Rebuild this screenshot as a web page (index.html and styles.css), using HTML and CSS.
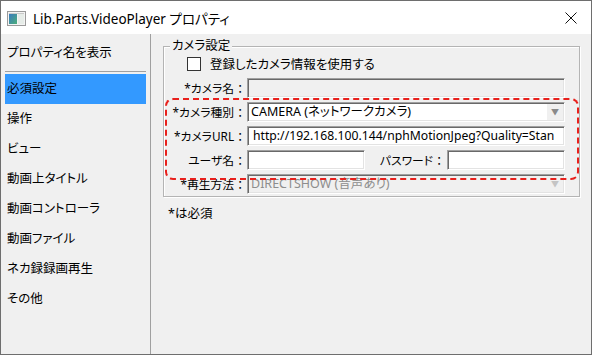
FILE: index.html
```html
<!DOCTYPE html>
<html>

<head>
    <meta charset='UTF-8'>
    <title>Lib.Parts.VideoPlayer プロパティ</title>
    <link rel="stylesheet" href="styles.css">
</head>

<body>
    <div class="window">
        <!-- タイトルバー -->
        <div class="titlebar">
            <svg class="app-icon" width="19" height="15" viewBox="0 0 19 15">
                <defs>
                    <linearGradient id="g" x1="0" y1="0" x2="1" y2="1">
                        <stop offset="0" stop-color="#3a7bbf" />
                        <stop offset="1" stop-color="#4cae7a" />
                    </linearGradient>
                </defs>
                <rect x="0.5" y="0.5" width="18" height="14" fill="#f4f4f4" stroke="#9a9a9a" />
                <rect x="2" y="3" width="8" height="10" fill="url(#g)" />
                <rect x="11" y="3" width="6" height="10" fill="#e6ece8" />
                <rect x="2" y="2" width="15" height="1" fill="#c8c8c8" />
            </svg>
            <span class="title">Lib.Parts.VideoPlayer プロパティ</span>
            <svg class="close" width="12" height="12" viewBox="0 0 12 12">
                <path d="M0.5 0.5 L11.5 11.5 M11.5 0.5 L0.5 11.5" stroke="#111" stroke-width="1" />
            </svg>
        </div>

        <div class="content">
            <!-- 左側メニュー -->
            <div class="sidebar">
                <div class="menu-head">プロパティ名を表示</div>
                <div class="menu-sep"></div>
                <div class="menu-item selected">必須設定</div>
                <div class="menu-item">操作</div>
                <div class="menu-item">ビュー</div>
                <div class="menu-item">動画上タイトル</div>
                <div class="menu-item">動画コントローラ</div>
                <div class="menu-item">動画ファイル</div>
                <div class="menu-item">ネカ録録画再生</div>
                <div class="menu-item">その他</div>
            </div>

            <!-- 右側設定 -->
            <div class="main">
                <div class="group">
                    <span class="group-title">カメラ設定</span>
                    <label class="check-row">
                        <span class="checkbox"></span>
                        <span>登録したカメラ情報を使用する</span>
                    </label>
                    <div class="form">
                        <div class="label">*カメラ名<span class="colon">：</span></div>
                        <div class="field disabled"></div>

                        <div class="label">*カメラ種別<span class="colon">：</span></div>
                        <div class="field combo">
                            <span class="combo-text">CAMERA (ネットワークカメラ)</span>
                            <span class="arrow">▼</span>
                        </div>

                        <div class="label">*カメラURL<span class="colon">：</span></div>
                        <div class="field url">http://192.168.100.144/nphMotionJpeg?Quality=Stan</div>

                        <div class="label">ユーザ名<span class="colon">：</span></div>
                        <div class="pair">
                            <div class="field half"></div>
                            <div class="label pass">パスワード<span class="colon">：</span></div>
                            <div class="field half"></div>
                        </div>

                        <div class="label">*再生方法<span class="colon">：</span></div>
                        <div class="field combo disabled">
                            <span class="combo-text">DIRECTSHOW (音声あり)</span>
                            <span class="arrow">▼</span>
                        </div>
                    </div>
                    <!-- 強調枠 -->
                    <div class="highlight"></div>
                </div>
                <p class="note">*は必須</p>
            </div>
        </div>
    </div>
</body>

</html>
```

FILE: styles.css
```css
* {
    box-sizing: border-box;
}

body {
    margin: 0;
    font-family: "Noto Sans", "Noto Sans CJK JP", sans-serif;
    font-feature-settings: "palt";
    font-size: 12.5px;
    color: #000;
}

/* ウィンドウ全体 */
.window {
    width: 592px;
    height: 355px;
    border: 1px solid #6e6e6e;
    display: flex;
    flex-direction: column;
    background: #fff;
}

.titlebar {
    height: 33px;
    display: flex;
    align-items: center;
    padding-left: 6px;
    background: #fff;
}

.app-icon {
    margin-top: 1px;
}

.title {
    margin-left: 7px;
    font-size: 13.5px;
    flex: 1;
}

.close {
    margin-right: 14px;
}

.content {
    flex: 1;
    display: flex;
    background: #f0f0f0;
}

/* 左メニュー */
.sidebar {
    width: 150px;
    border-right: 1px solid #a0a0a0;
    padding: 4px 4px 0 4px;
}

.menu-head,
.menu-item {
    height: 30px;
    line-height: 30px;
    padding-left: 2px;
    white-space: nowrap;
}

.menu-sep {
    height: 1px;
    background: #a0a0a0;
    margin: 3px 0 2px 0;
}

.menu-item.selected {
    background: #3399ff;
}

/* 右側 */
.main {
    flex: 1;
    padding: 12px 11px 0 12px;
}

.group {
    position: relative;
    border: 1px solid #b4b4b4;
    box-shadow: inset 1px 1px 0 #fff, 1px 1px 0 #fff;
    padding: 9px 13px 2px 0;
}

.group-title {
    position: absolute;
    top: -10px;
    left: 6px;
    padding: 0 2px;
    background: #f0f0f0;
    line-height: 18px;
}

.check-row {
    display: flex;
    align-items: center;
    height: 15px;
    margin: 0 0 7px 23px;
    gap: 9px;
}

.checkbox {
    width: 14px;
    height: 14px;
    border: 1px solid #333;
    background: #fff;
}

.form {
    display: grid;
    grid-template-columns: 80px 318px;
    column-gap: 3px;
    row-gap: 4px;
}

.label {
    text-align: right;
    line-height: 20px;
    font-size: 11.8px;
    white-space: nowrap;
}

.colon {
    margin-left: 3px;
    margin-right: 1px;
}

.field {
    height: 20px;
    background: #fff;
    border: 1px solid;
    border-color: #a0a0a0 #fff #fff #a0a0a0;
    box-shadow: inset 1px 1px 0 #696969, inset -1px -1px 0 #e3e3e3;
    line-height: 18px;
    white-space: nowrap;
    overflow: hidden;
}

.field.disabled {
    background: #f0f0f0;
}

.field.url {
    padding-left: 5px;
    font-size: 12.2px;
}

.combo {
    display: flex;
    align-items: center;
    padding-left: 3px;
}

.combo-text {
    flex: 1;
}

.combo.disabled .combo-text {
    color: #8d8d8d;
}

.arrow {
    width: 16px;
    height: 16px;
    margin-right: 1px;
    text-align: center;
    font-size: 8px;
    line-height: 16px;
    color: #8a8a8a;
    background: #f0f0f0;
}

.combo.disabled .arrow {
    color: #c4c4c4;
}

.pair {
    display: flex;
    gap: 4px;
}

.field.half {
    width: 118px;
}

.pass {
    flex: 1;
}

/* 赤い点線の強調枠 */
.highlight {
    position: absolute;
    left: 1px;
    top: 51px;
    width: 414px;
    height: 82px;
    border: 2px dashed #e8201c;
    border-radius: 8px;
    pointer-events: none;
}

.note {
    margin: 8px 0 0 5px;
    line-height: 17px;
}
```
